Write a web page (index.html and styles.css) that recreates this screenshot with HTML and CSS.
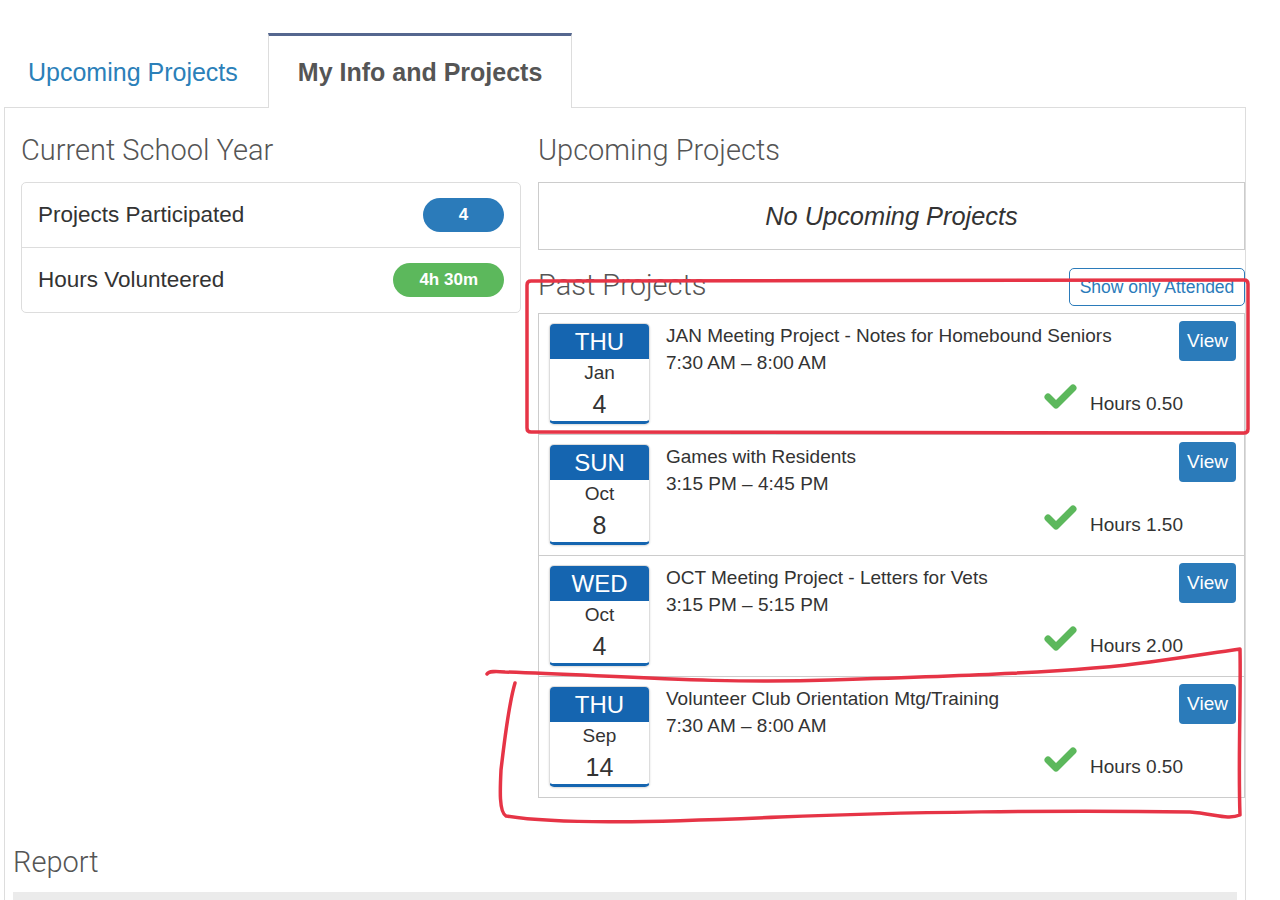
FILE: index.html
```html
<html>
    <head>
        <link rel="stylesheet" href="styles.css">
    </head>
    <body>
        <div class="page">
            <ul class="tabs">
                <li class="tab">Upcoming Projects</li>
                <li class="tab active">My Info and Projects</li>
            </ul>
            <div class="tab-panel">
                <div class="cols">
                    <div class="col-left">
                        <h3 class="title">Current School Year</h3>
                        <ul class="stats">
                            <li>Projects Participated <span class="badge badge-blue">4</span></li>
                            <li>Hours Volunteered <span class="badge badge-green">4h 30m</span></li>
                        </ul>
                    </div>
                    <div class="col-right">
                        <h3 class="title">Upcoming Projects</h3>
                        <div class="empty">No Upcoming Projects</div>
                        <div class="past-head">
                            <h3 class="title">Past Projects</h3>
                            <button class="attended">Show only Attended</button>
                        </div>
                        <ul class="projects">
                            <li>
                                <div class="date"><div class="dow">THU</div><div class="mon">Jan</div><div class="day">4</div></div>
                                <div class="info">
                                    <div class="name">JAN Meeting Project - Notes for Homebound Seniors</div>
                                    <div class="time">7:30 AM – 8:00 AM</div>
                                    <div class="hours">
                                        <svg class="check" viewBox="0 0 35 27" width="35" height="27"><polyline points="5,14 13,22 30,5"/></svg>
                                        <span>Hours 0.50</span>
                                    </div>
                                </div>
                                <button class="view">View</button>
                            </li>
                            <li>
                                <div class="date"><div class="dow">SUN</div><div class="mon">Oct</div><div class="day">8</div></div>
                                <div class="info">
                                    <div class="name">Games with Residents</div>
                                    <div class="time">3:15 PM – 4:45 PM</div>
                                    <div class="hours">
                                        <svg class="check" viewBox="0 0 35 27" width="35" height="27"><polyline points="5,14 13,22 30,5"/></svg>
                                        <span>Hours 1.50</span>
                                    </div>
                                </div>
                                <button class="view">View</button>
                            </li>
                            <li>
                                <div class="date"><div class="dow">WED</div><div class="mon">Oct</div><div class="day">4</div></div>
                                <div class="info">
                                    <div class="name">OCT Meeting Project - Letters for Vets</div>
                                    <div class="time">3:15 PM – 5:15 PM</div>
                                    <div class="hours">
                                        <svg class="check" viewBox="0 0 35 27" width="35" height="27"><polyline points="5,14 13,22 30,5"/></svg>
                                        <span>Hours 2.00</span>
                                    </div>
                                </div>
                                <button class="view">View</button>
                            </li>
                            <li>
                                <div class="date"><div class="dow">THU</div><div class="mon">Sep</div><div class="day">14</div></div>
                                <div class="info">
                                    <div class="name">Volunteer Club Orientation Mtg/Training</div>
                                    <div class="time">7:30 AM – 8:00 AM</div>
                                    <div class="hours">
                                        <svg class="check" viewBox="0 0 35 27" width="35" height="27"><polyline points="5,14 13,22 30,5"/></svg>
                                        <span>Hours 0.50</span>
                                    </div>
                                </div>
                                <button class="view">View</button>
                            </li>
                        </ul>
                    </div>
                </div>
                <div class="report">
                    <h3 class="title">Report</h3>
                    <div class="report-bar"></div>
                </div>
            </div>
            <!-- hand-drawn markup on top of the screenshot -->
            <svg class="marks" viewBox="0 0 1280 900" width="1280" height="900">
                <path d="M531 281 L1244 280 Q1248 280 1248 284 L1248 429 Q1248 433 1244 433 L531 432 Q527 432 527 428 L527 285 Q527 281 531 281 Z"/>
                <path d="M487 674 C489 671 495 671 505 672 C620 676 720 684 830 680 C960 676 1080 672 1150 662 C1195 656 1225 651 1240 649 C1241 700 1238 760 1240 815 C1228 820 1215 814 1190 812 C1060 810 900 812 780 817 C660 822 560 825 506 816 C499 812 500 790 501 770 C505 735 510 700 515 683"/>
            </svg>
        </div>
    </body>
</html>
```

FILE: styles.css
```css
* {
    box-sizing: border-box;
}
body {
    margin: 0;
    background: #fff;
    font-family: "Liberation Sans", Arial, sans-serif;
    color: #333;
}
.page {
    position: relative;
    width: 1280px;
    height: 900px;
    overflow: hidden;
    padding: 33px 0 0 4px;
}
.tabs {
    display: flex;
    list-style: none;
    margin: 0 0 -1px -6px;
    padding: 0;
    position: relative;
    z-index: 1;
}
.tabs .tab {
    height: 75px;
    padding: 0 29px;
    border: 1px solid transparent;
    border-top: 3px solid transparent;
    border-bottom: 0;
    font-size: 25px;
    line-height: 72px;
    color: #2b80b9;
}
.tabs .tab.active {
    background: #fff;
    border-color: #ddd;
    border-top-color: #55678f;
    color: #555;
    font-weight: bold;
}
.tab-panel {
    border: 1px solid #ddd;
    border-bottom: 0;
    width: 1242px;
    height: 900px;
    padding-top: 25px;
}
.cols {
    display: flex;
    gap: 17px;
    padding-left: 16px;
}
.col-left {
    width: 500px;
}
.col-right {
    width: 707px;
}
.title {
    margin: 0 0 15px;
    font-family: Roboto, "Liberation Sans", sans-serif;
    font-weight: 300;
    font-size: 29px;
    line-height: 34px;
    color: #555;
}
.stats {
    list-style: none;
    margin: 0;
    padding: 0;
    border: 1px solid #ddd;
    border-radius: 5px;
}
.stats li {
    display: flex;
    justify-content: space-between;
    align-items: center;
    height: 64px;
    padding: 0 16px;
    font-size: 22.5px;
}
.stats li + li {
    height: 65px;
    border-top: 1px solid #ddd;
}
.badge {
    min-width: 81px;
    height: 34px;
    padding: 0 26px;
    border-radius: 17px;
    line-height: 34px;
    text-align: center;
    font-size: 17px;
    font-weight: bold;
    color: #fff;
}
.badge-blue {
    background: #2b7bba;
}
.badge-green {
    background: #5cb85c;
}
.empty {
    height: 68px;
    border: 1px solid #ccc;
    display: flex;
    align-items: center;
    justify-content: center;
    font-style: italic;
    font-size: 25.4px;
}
.past-head {
    display: flex;
    justify-content: space-between;
    align-items: flex-start;
    height: 38px;
    margin: 18px 0 7px;
}
.past-head .title {
    margin: 0;
}
.attended {
    width: 176px;
    height: 38px;
    padding: 0;
    border: 1px solid #2b7bba;
    border-radius: 5px;
    background: #fff;
    color: #2b7bba;
    font-family: inherit;
    font-size: 17.5px;
}
.projects {
    list-style: none;
    margin: 0;
    padding: 0;
    border: 1px solid #ccc;
}
.projects li {
    display: flex;
    align-items: flex-start;
    height: 120px;
    padding: 9px 8px 0 10px;
}
.projects li + li {
    height: 121px;
    border-top: 1px solid #ccc;
}
.date {
    flex: none;
    width: 101px;
    height: 101px;
    border: 1px solid #ddd;
    border-bottom: 3px solid #1565b0;
    border-radius: 5px;
    overflow: hidden;
    text-align: center;
    box-shadow: 0 1px 2px rgba(0,0,0,0.15);
}
.date .dow {
    height: 35px;
    line-height: 35px;
    background: #1565b0;
    color: #fff;
    font-size: 24px;
}
.date .mon {
    line-height: 28px;
    font-size: 19px;
}
.date .day {
    line-height: 34px;
    font-size: 25px;
}
.info {
    flex: 1;
    margin: 0 -4px 0 16px;
    font-size: 19px;
}
.info .name {
    line-height: 26px;
}
.info .time {
    line-height: 28px;
}
.hours {
    display: flex;
    justify-content: flex-end;
    align-items: flex-start;
    margin-top: 13px;
    line-height: 28px;
}
.check {
    margin: -7px 12px 0 0;
}
.check polyline {
    fill: none;
    stroke: #5cb85c;
    stroke-width: 7;
    stroke-linecap: round;
    stroke-linejoin: round;
}
.view {
    flex: none;
    width: 57px;
    height: 40px;
    margin-top: -2px;
    padding: 0;
    border: 0;
    border-radius: 4px;
    background: #2b7bba;
    color: #fff;
    font-family: inherit;
    font-size: 19px;
}
.report {
    margin-top: 47px;
    padding: 0 8px;
}
.report .title {
    margin-bottom: 13px;
}
.report-bar {
    height: 30px;
    background: #ebebeb;
}
.marks {
    position: absolute;
    top: 0;
    left: 0;
    pointer-events: none;
    z-index: 5;
}
.marks path {
    fill: none;
    stroke: #e63446;
    stroke-width: 3.5;
    stroke-linecap: round;
    stroke-linejoin: round;
}
```
